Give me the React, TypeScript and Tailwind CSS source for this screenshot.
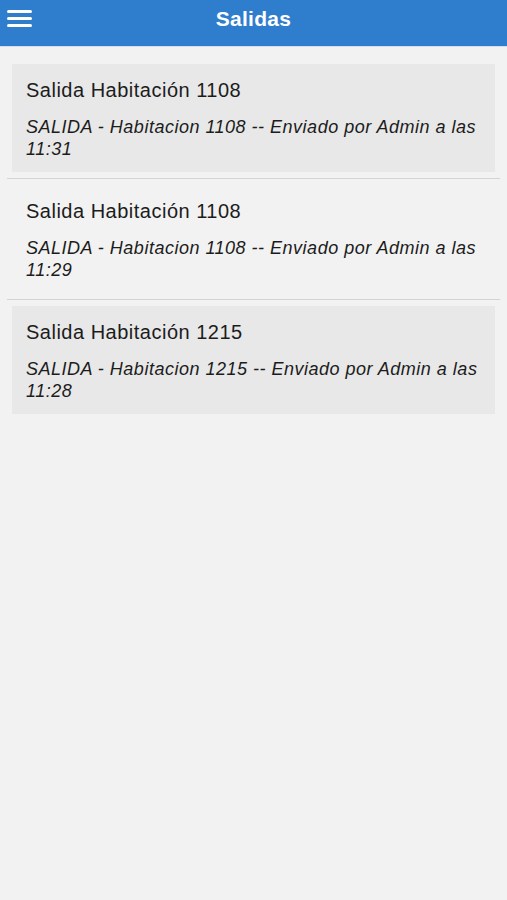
const items = [
  { title: 'Salida Habitación 1108', body: 'SALIDA - Habitacion 1108 -- Enviado por Admin a las 11:31', shaded: true },
  { title: 'Salida Habitación 1108', body: 'SALIDA - Habitacion 1108 -- Enviado por Admin a las 11:29', shaded: false },
  { title: 'Salida Habitación 1215', body: 'SALIDA - Habitacion 1215 -- Enviado por Admin a las 11:28', shaded: true },
]

export default function App() {
  return (
    <div className="flex min-h-[900px] w-full flex-col bg-[#f2f2f2] font-['Liberation_Sans',Arial,sans-serif]">
      {/* HEADER */}
      <div className="relative flex h-[47px] items-center justify-center border-b border-[#d6dde6] bg-[#2f7dcd]">
        <button className="absolute left-[7px] top-[10px] flex w-[25px] flex-col gap-[4px]">
          <span className="h-[3px] w-full rounded-sm bg-white"></span>
          <span className="h-[3px] w-full rounded-sm bg-white"></span>
          <span className="h-[3px] w-full rounded-sm bg-white"></span>
        </button>
        <h1 className="-mt-[9px] text-[21px] font-bold tracking-[0.3px] text-white">Salidas</h1>
      </div>

      {/* LIST */}
      <div className="flex flex-col pt-[11px]">
        {items.map((item, i) => (
          <div key={i} className="flex flex-col">
            <div className={`mx-[12px] mt-[6px] h-[108px] px-[14px] pt-[12px] ${item.shaded ? 'bg-[#e8e8e8]' : ''}`}>
              <p className="text-[20px] leading-[28px] tracking-[0.5px] text-[#1c1c1c]">{item.title}</p>
              <p className="mt-[12px] text-[18px] italic leading-[22px] tracking-[0.5px] text-[#1c1c1c]">{item.body}</p>
            </div>
            {i < items.length - 1 && <div className="mx-[7px] mt-[6px] h-px bg-[#d4d4d4]"></div>}
          </div>
        ))}
      </div>
    </div>
  )
}
